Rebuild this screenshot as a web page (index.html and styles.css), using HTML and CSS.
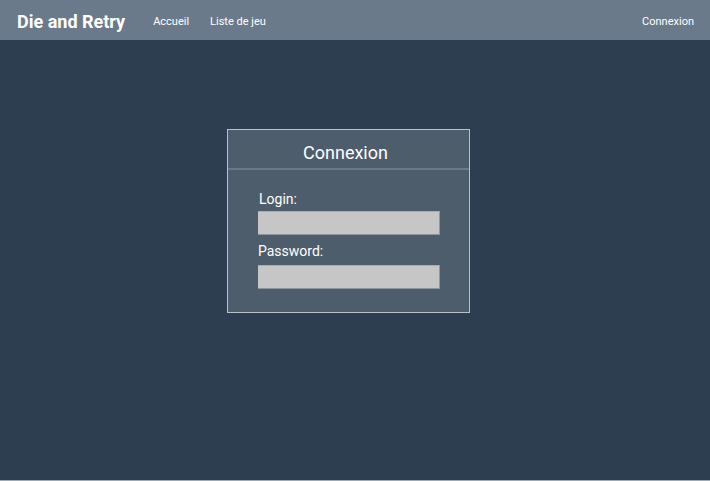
FILE: index.html
```html
<!DOCTYPE html>
<html>
<head>
<meta charset="utf-8">
<link rel="stylesheet" href="styles.css">
</head>
<body>
<nav class="navbar">
  <div class="nav-left">
    <span class="brand">Die and Retry</span>
    <a class="nav-link">Accueil</a>
    <a class="nav-link">Liste de jeu</a>
  </div>
  <a class="nav-link">Connexion</a>
</nav>
<main class="main">
  <form class="card">
    <div class="card-header">Connexion</div>
    <div class="card-body">
      <label class="label label-login">Login:</label>
      <input class="field" type="text">
      <label class="label label-pass">Password:</label>
      <input class="field" type="password">
    </div>
  </form>
</main>
<div class="bottom-line"></div>
</body>
</html>
```
FILE: styles.css
```css
html, body { margin: 0; padding: 0; }
body {
  background: #2c3e50;
  font-family: Roboto, "Liberation Sans", sans-serif;
  color: #fff;
  height: 481px;
  display: flex;
  flex-direction: column;
  overflow: hidden;
}
.navbar {
  height: 40px;
  box-sizing: border-box;
  background: #6b7a8a;
  display: flex;
  align-items: center;
  justify-content: space-between;
  padding: 3px 16px 0 17px;
  flex-shrink: 0;
}
.nav-left { display: flex; align-items: center; }
.brand {
  font-size: 18px;
  font-weight: 700;
  margin-right: 28px;
}
.nav-link {
  font-size: 11px;
  color: #fff;
  margin-right: 21px;
}
.navbar > .nav-link { margin-right: 0; }
.main {
  flex: 1;
  padding-top: 89px;
  padding-left: 227px;
}
.card {
  width: 241px;
  height: 182px;
  background: #4e5d6c;
  border: 1px solid #b8c0c8;
  display: flex;
  flex-direction: column;
  margin: 0;
}
.card-header {
  height: 40px;
  border-bottom: 2px solid #6b7a8a;
  font-size: 18px;
  line-height: 30px;
  text-align: center;
  padding: 8px 6px 0 0;
  box-sizing: border-box;
}
.card-body {
  padding: 21px 0 0 30px;
  display: flex;
  flex-direction: column;
  align-items: flex-start;
}
.label {
  font-size: 14px;
  line-height: 16px;
  margin-bottom: 4px;
}
.label-login { margin-left: 1px; }
.label-pass { margin-top: 8px; margin-bottom: 6px; }
.field {
  width: 182px;
  height: 24px;
  box-sizing: border-box;
  background: #c6c6c6;
  border: none;
  border-top: 1px solid #a8adb2;
  border-right: 1px solid #8d959d;
  border-bottom: 1px solid #8d959d;
  margin: 0;
  padding: 0;
}
.bottom-line {
  height: 1px;
  background: #a0a8b0;
  flex-shrink: 0;
}
```
